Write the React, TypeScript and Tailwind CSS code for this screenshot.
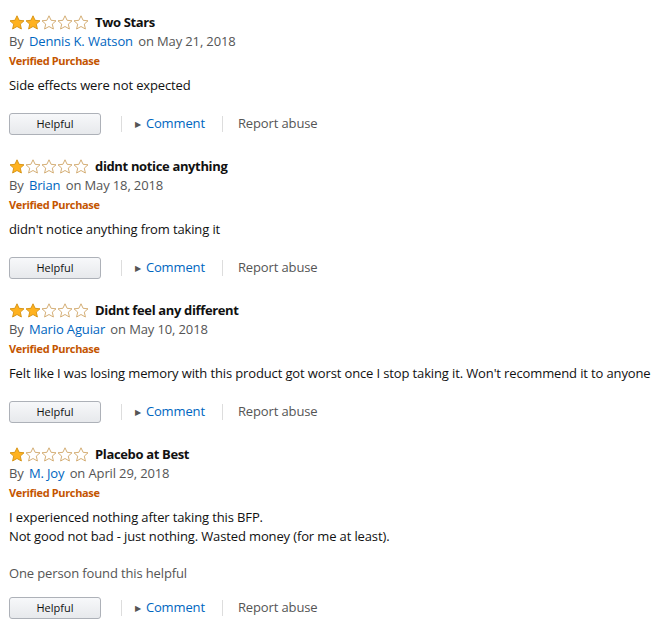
const reviews = [
  {
    stars: 2,
    title: 'Two Stars',
    author: 'Dennis K. Watson',
    date: 'May 21, 2018',
    body: ['Side effects were not expected'],
  },
  {
    stars: 1,
    title: 'didnt notice anything',
    author: 'Brian',
    date: 'May 18, 2018',
    body: ["didn't notice anything from taking it"],
  },
  {
    stars: 2,
    title: 'Didnt feel any different',
    author: 'Mario Aguiar',
    date: 'May 10, 2018',
    body: [
      "Felt like I was losing memory with this product got worst once I stop taking it. Won't recommend it to anyone",
    ],
  },
  {
    stars: 1,
    title: 'Placebo at Best',
    author: 'M. Joy',
    date: 'April 29, 2018',
    body: ['I experienced nothing after taking this BFP.', 'Not good not bad - just nothing. Wasted money (for me at least).'],
    helpful: 'One person found this helpful',
  },
];

function Star({ filled }: { filled: boolean }) {
  return (
    <svg width="16" height="15" viewBox="0 0 16 15" className="shrink-0">
      <path
        d="M8 0.8 L10.1 5.3 L15 5.8 L11.3 9.1 L12.4 14 L8 11.5 L3.6 14 L4.7 9.1 L1 5.8 L5.9 5.3 Z"
        fill={filled ? '#ffb21f' : '#ffffff'}
        stroke={filled ? '#d4900f' : '#cfa566'}
        strokeWidth="0.9"
        strokeLinejoin="round"
      />
    </svg>
  );
}

function Stars({ count }: { count: number }) {
  return (
    <div className="flex">
      {[0, 1, 2, 3, 4].map((i) => (
        <Star key={i} filled={i < count} />
      ))}
    </div>
  );
}

export default function App() {
  return (
    <div className="w-[663px] bg-white pl-[9px] pt-[13px] text-[13px] tracking-[-0.13px] text-[#111] [font-family:'Open_Sans',sans-serif]">
      {reviews.map((r) => (
        <div key={r.title} className="mb-[22px]">
          <div className="flex h-[19px] items-center gap-[6px]">
            <Stars count={r.stars} />
            <span className="font-bold tracking-[-0.35px]">{r.title}</span>
          </div>
          <div className="h-[19px] leading-[19px] text-[#555]">
            By <span className="px-[2px] text-[#0066c0]">{r.author}</span> on {r.date}
          </div>
          <div className="h-[20px] text-[11px] font-bold leading-[19px] tracking-[-0.35px] text-[#c45500]">
            Verified Purchase
          </div>
          <div className="mt-[5px] leading-[19px]">
            {r.body.map((line) => (
              <div key={line}>{line}</div>
            ))}
          </div>
          {r.helpful && <div className="mt-[18px] leading-[19px] text-[#555]">{r.helpful}</div>}
          <div className={r.helpful ? 'mt-[14px] flex h-[22px] items-center' : 'mt-[18px] flex h-[22px] items-center'}>
            <button className="h-[22px] w-[92px] rounded-[3px] border border-[#adb1b8] bg-gradient-to-b from-[#f7f8fa] to-[#e7e9ec] text-[11px] leading-[20px] tracking-normal text-[#111]">
              Helpful
            </button>
            <span className="ml-[20px] h-[16px] w-px bg-[#ddd]" />
            <span className="ml-[13px] mr-[5px] text-[8px] text-[#555]">▶</span>
            <span className="text-[#0066c0]">Comment</span>
            <span className="ml-[17px] h-[16px] w-px bg-[#ddd]" />
            <span className="ml-[15px] text-[#555]">Report abuse</span>
          </div>
        </div>
      ))}
    </div>
  );
}
